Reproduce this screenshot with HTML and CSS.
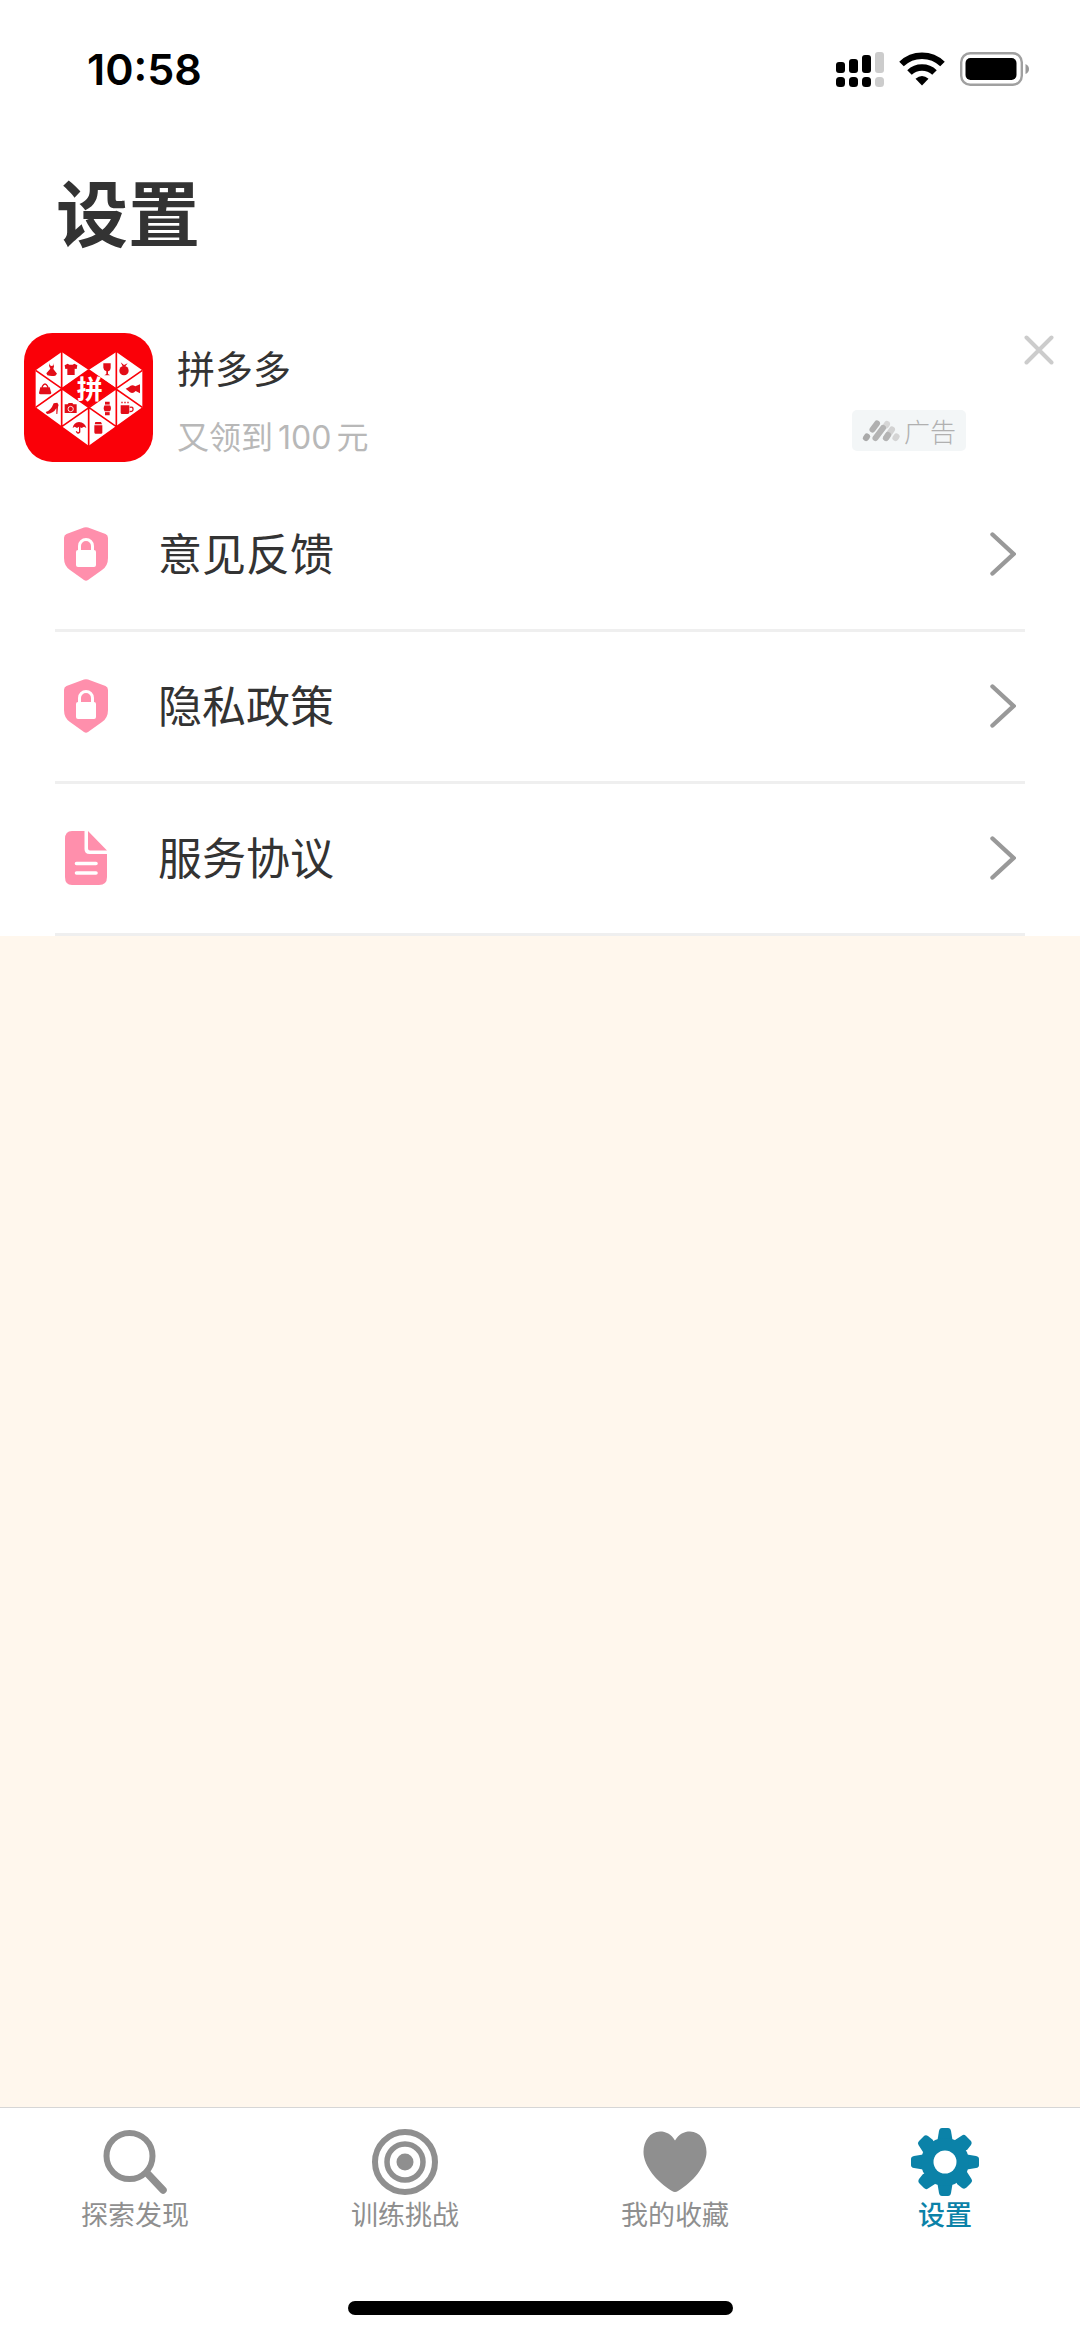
FILE: index.html
```html
<!DOCTYPE html>
<html lang="zh-CN">
<head>
<meta charset="utf-8">
<meta name="viewport" content="width=device-width, initial-scale=1">
<title>设置</title>
<link rel="stylesheet" href="styles.css">
</head>
<body>
<svg class="sprite" aria-hidden="true">
  <symbol id="shield" viewBox="0 0 46 54">
    <path fill="#ff8fac" d="M21 .6Q23 0 25 .6L42.500 7Q45 8 45 11V31Q45 39 39 43L25 53Q23 54.400 21 53L7 43Q1 39 1 31V11Q1 8 3.500 7Z"/>
    <rect x="13" y="23" width="20" height="17" rx="2" fill="#fff"/>
    <path d="M16.500 24V19a6.500 6.500 0 0 1 13 0V24" fill="none" stroke="#fff" stroke-width="3"/>
  </symbol>
  <symbol id="chevron" viewBox="0 0 26 44">
    <path d="M2.500 2.500L23.500 22L2.500 41.500" fill="none" stroke="#999" stroke-width="4.400" stroke-linecap="round" stroke-linejoin="miter"/>
  </symbol>
</svg>

<div class="status">
  <span class="time">10:58</span>
  <div class="indicators">
    <svg width="48" height="36" viewBox="0 0 48 36" aria-hidden="true">
      <g fill="#000"><rect x="0" y="11" width="9" height="11" rx="3"/><rect x="13" y="8" width="9" height="14" rx="3"/><rect x="26" y="4" width="9" height="18" rx="3"/>
      <rect x="0" y="26" width="9" height="10" rx="3.500"/><rect x="13" y="26" width="9" height="10" rx="3.500"/><rect x="26" y="26" width="9" height="10" rx="3.500"/></g>
      <g fill="#ccc"><rect x="39" y="1" width="9" height="21" rx="3"/><rect x="39" y="26" width="9" height="10" rx="3.500"/></g>
    </svg>
    <svg width="46" height="36" viewBox="0 0 46 36" aria-hidden="true">
      <path d="M2.500 13A29.500 29.500 0 0 1 43.500 13" fill="none" stroke="#000" stroke-width="6.500"/>
      <path d="M10.500 21.500A18 18 0 0 1 35.500 21.500" fill="none" stroke="#000" stroke-width="6.500"/>
      <path d="M16.500 27.700Q23 22.300 29.500 27.700L23 34.500Z"/>
    </svg>
    <svg width="70" height="36" viewBox="0 0 70 36" aria-hidden="true">
      <rect x="1.200" y="2.200" width="60.600" height="31.600" rx="9" fill="none" stroke="#a0a0a0" stroke-width="2.400"/>
      <rect x="5.500" y="7" width="51" height="22" rx="5"/>
      <path d="M65.500 13Q69 14.500 69 18T65.500 23Z" fill="#999"/>
    </svg>
  </div>
</div>

<header class="header"><h1>设置</h1></header>

<main class="main">
  <section class="ad" aria-label="广告">
    <svg class="ad-icon" viewBox="27 24 387 387" role="img" aria-label="拼多多">
      <rect x="27" y="24" width="387" height="387" rx="85" fill="#fa0008"/>
      <path fill="#fff" d="M62 136L140 81L221 135L304 81L382 136V247L221 362L62 247Z"/>
      <path fill="#fa0008" d="M221 135L304 190L221 247L140 190Z"/>
      <path fill="none" stroke="#fa0008" stroke-width="5" d="M140 78V308M304 78V308M221 247V365M62 136L304 305M382 136L140 305M62 247L221 135M382 247L221 135"/>
      <text class="ad-glyph" x="224" y="222" text-anchor="middle">拼</text>
      <g fill="#e20d18">
        <path d="M105 114V121Q110 125 115 121V114L117 124L115 132L126 146L121 152Q109 155 97 151L94 145L106 131L102 122Z"/>
        <path d="M158 116Q168 123 178 116L187 121L185 132L179 131V150H157V131L151 132L149 121Z"/>
        <path d="M265 115H287V128Q286 138 279 139V147L285 151H268L274 147V139Q266 137 265 128Z"/>
        <circle cx="327" cy="137" r="14"/>
        <path d="M317 112L327 120L338 115L331 124H323Z"/>
        <path d="M76 187H104L109 204Q108 208 104 208H77Q72 208 72 203Z"/>
        <path d="M332 191L342 186Q350 177 361 184L375 178V205L362 198Q354 207 345 202Z"/>
        <path d="M92 261Q108 257 116 235L127 233Q133 239 129 246L127 267H124V250Q115 266 96 267Z"/>
        <path d="M149 238H158L161 234H172L175 238H185V264H149Z"/>
        <path d="M270 230H284V239Q292 250 284 260V271H270V260Q262 250 270 239Z"/>
        <path d="M317 241H343V264Q341 267 337 267H321Q317 267 317 263Z"/>
        <path d="M173 309Q176 292 192 291Q210 292 214 309L207 305L200 309L192 305L186 309L179 305Z"/>
        <path d="M238 301H262V323Q262 326 258 326H241Q238 326 238 322ZM241 291H258L261 298H239Z"/>
      </g>
      <g fill="none" stroke="#e20d18" stroke-width="4">
        <path d="M82 188V184Q90 170 98 184V188M344 247Q355 244 354 254Q353 261 344 259M194 305V321Q188 328 184 319M321 230V235M330 230V235M339 230V235"/>
      </g>
      <g fill="none" stroke="#fff" stroke-width="2.500"><circle cx="167" cy="252" r="8"/><path d="M269 240H285M269 260H285"/></g>
    </svg>
    <div class="ad-copy">
      <p class="ad-title">拼多多</p>
      <p class="ad-text">又领到<span class="amount">100</span>元</p>
    </div>
    <div class="ad-badge">
      <svg width="38" height="22" viewBox="0 0 38 22" aria-hidden="true">
        <g fill="none" stroke-width="6" stroke-linecap="round">
          <path d="M24 5.500L25 4" stroke="#d6d6d6"/>
          <path d="M4 18L5 16.500" stroke="#aaa"/>
          <path d="M10.500 9.500L15 3.500" stroke="#b0b0b0"/>
          <path d="M13.500 18L21 8" stroke="#b4b4b4"/>
          <path d="M24 18L30 9.500" stroke="#d2d2d2"/>
          <path d="M24 18L26 15" stroke="#b4b4b4"/>
          <path d="M33.500 18L34.500 16.500" stroke="#d4d4d4"/>
        </g>
      </svg>
      <span>广告</span>
    </div>
    <button class="ad-close" type="button" aria-label="关闭">
      <svg width="30" height="30" viewBox="0 0 30 30" aria-hidden="true"><path d="M2.500 2.500L27.500 27.500M27.500 2.500L2.500 27.500" stroke="#ccc" stroke-width="4" stroke-linecap="round"/></svg>
    </button>
  </section>

  <nav class="list" aria-label="设置列表">
    <a class="row" href="#feedback">
      <svg class="row-icon" aria-hidden="true"><use href="#shield"/></svg>
      <span class="row-label">意见反馈</span>
      <svg class="chevron" aria-hidden="true"><use href="#chevron"/></svg>
    </a>
    <a class="row" href="#privacy">
      <svg class="row-icon" aria-hidden="true"><use href="#shield"/></svg>
      <span class="row-label">隐私政策</span>
      <svg class="chevron" aria-hidden="true"><use href="#chevron"/></svg>
    </a>
    <a class="row" href="#terms">
      <svg class="row-icon" viewBox="0 0 46 54" aria-hidden="true">
        <path fill="#ff8fac" d="M9 0H21.500V18Q21.500 23 26.500 23H44V46Q44 54 36 54H9Q2 54 2 46V8Q2 0 9 0ZM25 0L44 19.500H27Q25 19.500 25 17.500Z"/>
        <path d="M13.500 32.500H33M13.500 42H33" stroke="#fff" stroke-width="3.600" stroke-linecap="round"/>
      </svg>
      <span class="row-label">服务协议</span>
      <svg class="chevron" aria-hidden="true"><use href="#chevron"/></svg>
    </a>
  </nav>
</main>

<footer class="footer">
  <nav class="tabs" aria-label="主导航">
    <a class="tab" href="#explore">
      <svg class="tab-icon" viewBox="0 0 68 68" aria-hidden="true" fill="none" stroke="#8f8f8f"><circle cx="28.500" cy="28" r="23" stroke-width="6"/><path d="M46 45L62 62" stroke-width="7.500" stroke-linecap="round"/></svg>
      <span>探索发现</span>
    </a>
    <a class="tab" href="#training">
      <svg class="tab-icon" viewBox="0 0 68 68" aria-hidden="true" fill="none" stroke="#8f8f8f"><circle cx="34" cy="34" r="30" stroke-width="6"/><circle cx="34" cy="34" r="18" stroke-width="5.500"/><circle cx="34" cy="34" r="8.500" fill="#8f8f8f" stroke="none"/></svg>
      <span>训练挑战</span>
    </a>
    <a class="tab" href="#favorites">
      <svg class="tab-icon" viewBox="0 0 68 68" aria-hidden="true"><path fill="#8f8f8f" d="M34 12.500C38 6 43 3.500 49 3.500C59 3.500 65.500 13 65.500 24C65.500 38 52 54 37 63Q34 64.800 31 63C16 54 2.500 38 2.500 24C2.500 13 9 3.500 19 3.500C25 3.500 30 6 34 12.500Z"/></svg>
      <span>我的收藏</span>
    </a>
    <a class="tab tab-active" href="#settings" aria-current="page">
      <svg class="tab-icon" viewBox="0 0 68 68" aria-hidden="true">
        <g fill="#0b82a8">
          <path id="tooth" d="M26 15L28 3Q28.500 0 31 0H37Q39.500 0 40 3L42 15L44 34H24Z"/>
          <use href="#tooth" transform="rotate(90 34 34)"/><use href="#tooth" transform="rotate(180 34 34)"/><use href="#tooth" transform="rotate(270 34 34)"/>
          <path id="corner" d="M22 12L17 8Q14.500 6.500 12.500 8.500L8 13Q6 15 7.500 17L12 24L24 24Z"/>
          <use href="#corner" transform="rotate(90 34 34)"/><use href="#corner" transform="rotate(180 34 34)"/><use href="#corner" transform="rotate(270 34 34)"/>
          <circle cx="34" cy="34" r="24"/>
        </g>
        <circle cx="34" cy="34" r="11.500" fill="#fff"/>
      </svg>
      <span>设置</span>
    </a>
  </nav>
  <div class="home-bar"></div>
</footer>
</body>
</html>
```
FILE: styles.css
```css
* {
  box-sizing: border-box;
}

body {
  margin: 0;
  min-height: 100vh;
  display: flex;
  flex-direction: column;
  background: #fff;
  color: #333;
  font-family: "Noto Sans CJK SC", sans-serif;
}

a {
  color: inherit;
  text-decoration: none;
}

p,
h1 {
  margin: 0;
}

svg {
  display: block;
  flex: none;
}

.sprite {
  position: absolute;
  width: 0;
  height: 0;
}

.status {
  display: flex;
  align-items: center;
  justify-content: space-between;
  height: 138px;
  padding: 0 50px 0 87px;
}

.time {
  color: #000;
  font-family: Inter, sans-serif;
  font-size: 43px;
  font-weight: 600;
}

.indicators {
  display: flex;
  gap: 15px;
}

.header {
  padding: 20px 56px 30px;
}

.header h1 {
  font-size: 72px;
  font-weight: 700;
  line-height: 104px;
}

.main {
  flex: 1;
  background: #fff7ed;
}

.ad {
  display: flex;
  align-items: flex-start;
  padding: 41px 26px 18px 24px;
  background: #fff;
}

.ad-icon {
  width: 129px;
  height: 129px;
}

.ad-glyph {
  fill: #fff;
  font-size: 78px;
  font-weight: 700;
}

.ad-copy {
  flex: 1;
  padding: 6px 0 0 24px;
}

.ad-title {
  font-size: 38px;
  line-height: 56px;
}

.ad-text {
  padding-top: 16px;
  color: #b8b8b8;
  font-size: 32px;
  line-height: 48px;
}

.amount {
  margin: 0 5px;
  font-family: Inter, sans-serif;
}

.ad-badge {
  display: flex;
  align-items: center;
  gap: 4px;
  height: 41px;
  margin: 77px 58px 0 0;
  padding: 0 10px;
  border-radius: 5px;
  background: #f3f6f7;
  color: #b0b0b0;
  font-size: 26px;
  font-weight: 300;
}

.ad-close {
  margin-top: 2px;
  padding: 0;
  border: 0;
  background: none;
}

.list {
  padding: 0 55px;
  background: #fff;
}

.row {
  display: flex;
  align-items: center;
  height: 152px;
  padding: 0 9px 2px 8px;
  border-bottom: 3px solid #efefef;
}

.row-icon {
  width: 46px;
  height: 54px;
}

.row-label {
  flex: 1;
  padding: 0 0 4px 49px;
  font-size: 44px;
}

.chevron {
  width: 26px;
  height: 44px;
}

.footer {
  border-top: 1px solid #d6d6d6;
  background: #fff;
}

.tabs {
  display: grid;
  grid-template-columns: repeat(4, 1fr);
  padding-top: 20px;
}

.tab {
  display: flex;
  flex-direction: column;
  align-items: center;
  color: #8f8f8f;
  font-size: 27px;
  line-height: 36px;
}

.tab-icon {
  width: 68px;
  height: 68px;
}

.tab-active {
  color: #0b82a8;
  font-weight: 500;
}

.home-bar {
  width: 385px;
  height: 14px;
  margin: 69px auto 22px;
  border-radius: 7px;
  background: #000;
}
```
